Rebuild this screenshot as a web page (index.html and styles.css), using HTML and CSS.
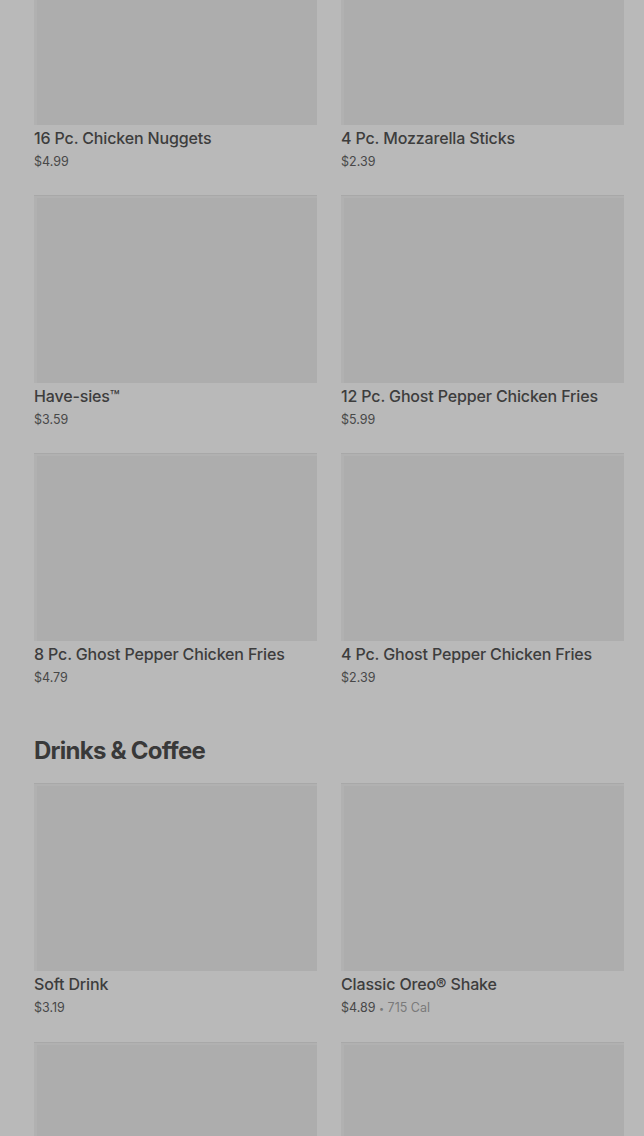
FILE: index.html
```html
<!DOCTYPE html>
<html lang="en">
<head>
  <meta charset="UTF-8" />
  <meta name="viewport" content="width=device-width, initial-scale=1.0"/>
  <title>Menu</title>
  <link rel="stylesheet" href="styles.css">
</head>

<body>
  <div class="menu">
    <section class="menu-section">
      <div class="item-grid first">
        <div class="item">
          <div class="item-img"></div>
          <div class="item-name">16 Pc. Chicken Nuggets</div>
          <div class="item-price">$4.99</div>
        </div>
        <div class="item">
          <div class="item-img"></div>
          <div class="item-name">4 Pc. Mozzarella Sticks</div>
          <div class="item-price">$2.39</div>
        </div>
        <div class="item">
          <div class="item-img"></div>
          <div class="item-name">Have-sies™</div>
          <div class="item-price">$3.59</div>
        </div>
        <div class="item">
          <div class="item-img"></div>
          <div class="item-name">12 Pc. Ghost Pepper Chicken Fries</div>
          <div class="item-price">$5.99</div>
        </div>
        <div class="item">
          <div class="item-img"></div>
          <div class="item-name">8 Pc. Ghost Pepper Chicken Fries</div>
          <div class="item-price">$4.79</div>
        </div>
        <div class="item">
          <div class="item-img"></div>
          <div class="item-name">4 Pc. Ghost Pepper Chicken Fries</div>
          <div class="item-price">$2.39</div>
        </div>
      </div>
    </section>

    <section class="menu-section">
      <h2>Drinks &amp; Coffee</h2>
      <div class="item-grid">
        <div class="item">
          <div class="item-img"></div>
          <div class="item-name">Soft Drink</div>
          <div class="item-price">$3.19</div>
        </div>
        <div class="item">
          <div class="item-img"></div>
          <div class="item-name">Classic Oreo® Shake</div>
          <div class="item-price">$4.89 <span class="dot">•</span> <span class="cal">715 Cal</span></div>
        </div>
        <div class="item">
          <div class="item-img"></div>
        </div>
        <div class="item">
          <div class="item-img"></div>
        </div>
      </div>
    </section>
  </div>
</body>
</html>
```

FILE: styles.css
```css
html, body {
  margin: 0;
  padding: 0;
  height: 100%;
  overflow: hidden;
}

body {
  font-family: 'Inter', sans-serif;
  background: #b9b9b9;
  color: #3b3b3b;
}

.menu {
  padding: 0 20px 0 34px;
}

.item-grid {
  display: grid;
  grid-template-columns: 1fr 1fr;
  column-gap: 24px;
  row-gap: 24px;
}

/* page is scrolled part way into the first section */
.item-grid.first {
  margin-top: -63px;
}

.item-img {
  height: 188px;
  background: #adadad;
  box-shadow: inset 0 1px 0 #a8a8a8, inset 3px 3px 0 #b1b1b1;
}

.item-name {
  margin-top: 2px;
  font-size: 16px;
  line-height: 22px;
  font-weight: 500;
  letter-spacing: -0.15px;
  color: #3d3d3d;
}

.item-price {
  margin-top: 4px;
  font-size: 12.5px;
  line-height: 18px;
  color: #484848;
}

.item-price .dot {
  color: #7a7a7a;
  font-size: 9px;
}

.item-price .cal {
  color: #7a7a7a;
}

.menu-section h2 {
  margin: 48px 0 16px;
  font-size: 24px;
  line-height: 32px;
  font-weight: 700;
  letter-spacing: -0.75px;
  color: #393939;
}
```
